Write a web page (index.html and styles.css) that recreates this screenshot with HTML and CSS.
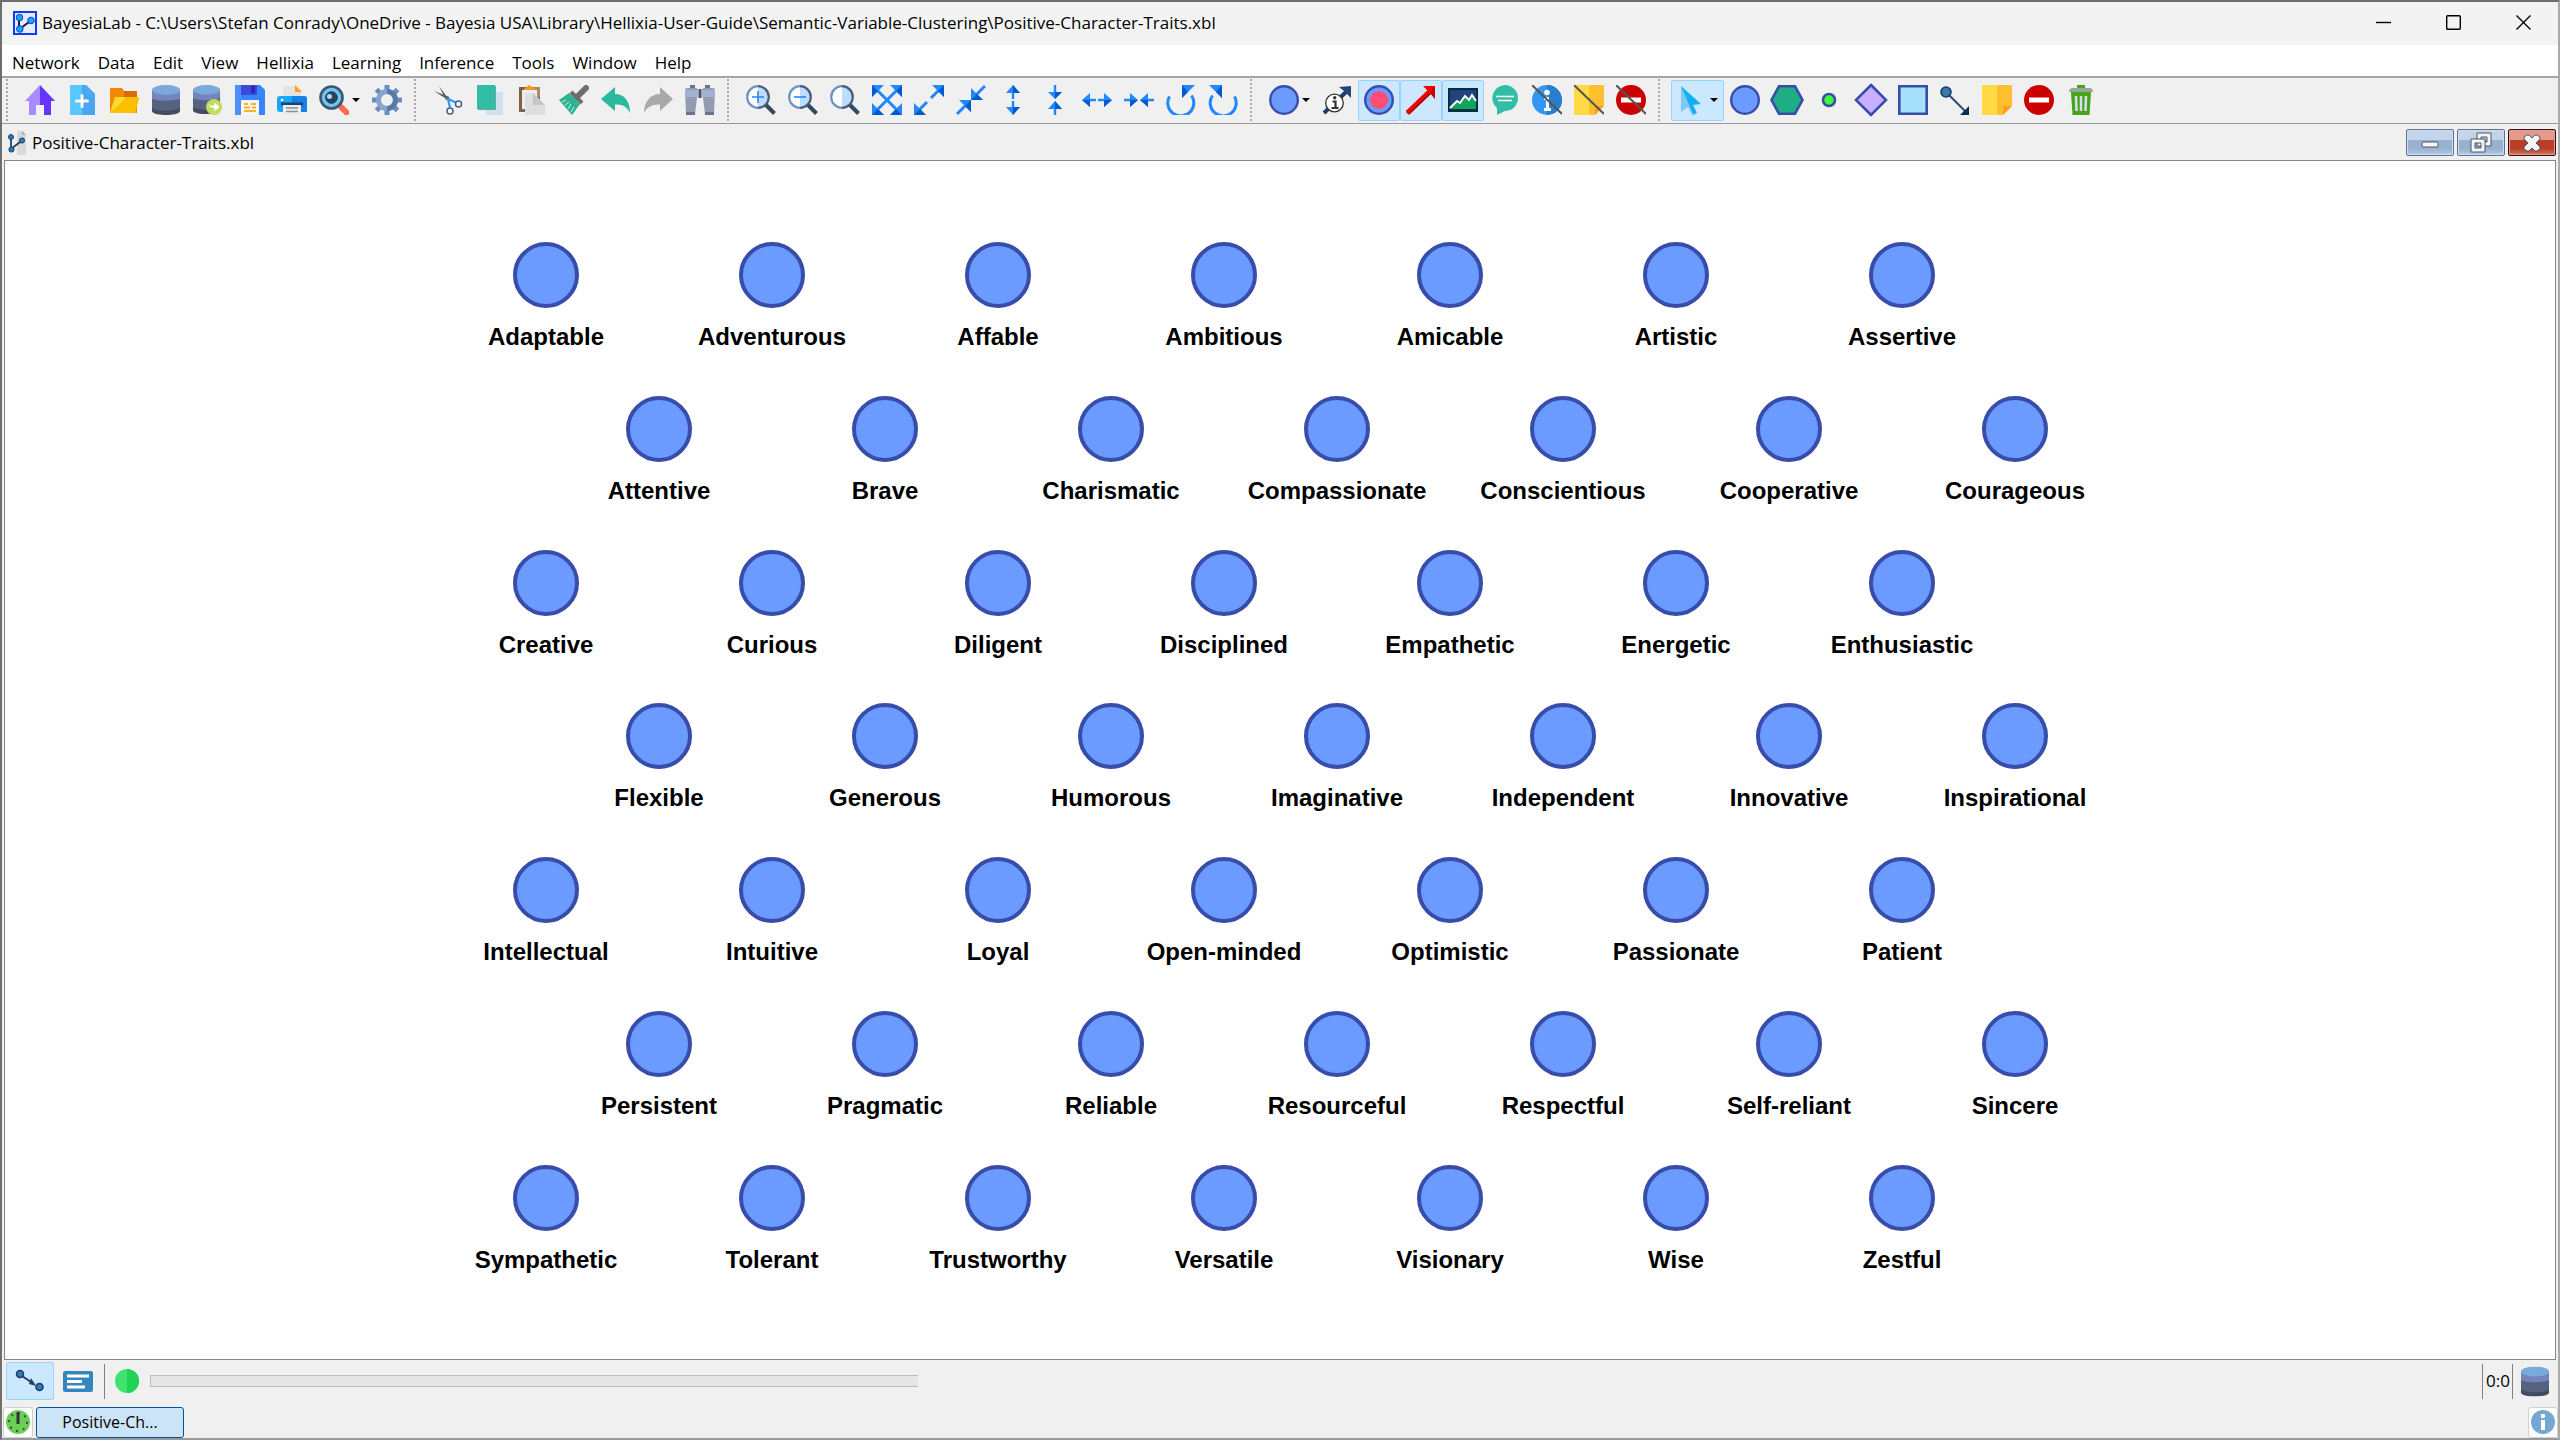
FILE: index.html
```html
<!DOCTYPE html>
<html lang="en">
<head>
  <meta charset="UTF-8">
  <title>BayesiaLab</title>
  <link rel="stylesheet" href="styles.css">
</head>
<body>
  <!-- shapes used more than once -->
  <svg class="defs">
    <symbol id="db" viewBox="0 0 30 30">
      <path d="M1 22v4c0 5.400 28 5.400 28 0v-4z" fill="#434b61"/>
      <path d="M1 15v7c0 5 28 5 28 0v-7z" fill="#56637f"/>
      <path d="M1 5v7c0 5.500 28 5.500 28 0V5z" fill="#7584c1"/>
      <path d="M1 12v4c0 5.400 28 5.400 28 0v-4c0 5-28 5-28 0z" fill="#56637f"/>
      <ellipse cx="15" cy="5" rx="14" ry="5" fill="#7ba9d9"/>
    </symbol>
    <symbol id="lens" viewBox="0 0 30 30">
      <path d="M19 19l9.500 9.500" stroke="#324860" stroke-width="4"/>
      <circle cx="12" cy="12" r="10.500" fill="#fff"/>
      <path d="M12 1.500a10.500 10.500 0 0 1 0 21z" fill="#bedcff"/>
      <path d="M12 1.200a10.800 10.800 0 0 0 0 21.600" fill="none" stroke="#6c93c3" stroke-width="2.200"/>
      <path d="M12 1.200a10.800 10.800 0 0 1 0 21.600" fill="none" stroke="#465d7c" stroke-width="2.200"/>
    </symbol>
    <symbol id="note" viewBox="0 0 30 30">
      <path d="M0 0h15v30H0z" fill="#ffda44"/>
      <path d="M15 0h15v21l-9 9h-6z" fill="#fdbf2d"/>
      <path d="M21 30v-9h9z" fill="#ff9f22"/>
    </symbol>
    <symbol id="stop" viewBox="0 0 30 30">
      <circle cx="15" cy="15" r="15" fill="#cd0000"/>
      <path d="M5 12.500h20v5H5z" fill="#fff"/>
    </symbol>
    <symbol id="rotate" viewBox="0 0 30 30">
      <path d="M3.500 11.500a13 13 0 1 0 22-1" fill="none" stroke="#2288ff" stroke-width="3"/>
      <path d="M16 0h13L16 13z" fill="#2288ff"/>
      <path d="M16 0v13l6-6z" fill="#005bcf"/>
    </symbol>
    <symbol id="graph" viewBox="0 0 18 24">
      <path d="M9 0h6l3 4v20H9z" fill="#d9d9d9"/>
      <path d="M14 0v4h4z" fill="#b0b0b0"/>
      <path d="M3 6v12l11-8.500" fill="none" stroke="#24405f" stroke-width="1.800"/>
      <circle cx="3" cy="6" r="2.500" fill="#2f7da5" stroke="#17407f"/>
      <circle cx="3.500" cy="18.500" r="2.600" fill="#2f7da5" stroke="#17407f"/>
      <circle cx="14" cy="9.500" r="2.600" fill="#2f7da5" stroke="#17407f"/>
    </symbol>
  </svg>

  <div class="window">
    <header class="titlebar">
      <svg class="app-icon" viewBox="0 0 24 24">
        <rect x="1" y="1" width="22" height="22" fill="#e9ecf8" stroke="#0a3cf5" stroke-width="2"/>
        <path d="M6 6.500v12l12-9" fill="none" stroke="#16203a" stroke-width="2"/>
        <circle cx="6.500" cy="6.500" r="3.300" fill="#1ba8ea" stroke="#0a3cf5"/>
        <circle cx="6.800" cy="18" r="3.300" fill="#1ba8ea" stroke="#0a3cf5"/>
        <circle cx="18" cy="9.500" r="3.300" fill="#1ba8ea" stroke="#0a3cf5"/>
      </svg>
      <h1 class="caption">BayesiaLab - C:\Users\Stefan Conrady\OneDrive - Bayesia USA\Library\Hellixia-User-Guide\Semantic-Variable-Clustering\Positive-Character-Traits.xbl</h1>
      <button class="win-btn" aria-label="Minimize"><svg viewBox="0 0 15 15"><path d="M0 7.500h15"/></svg></button>
      <button class="win-btn" aria-label="Maximize"><svg viewBox="0 0 15 15"><rect x=".7" y=".7" width="13.600" height="13.600" rx="1"/></svg></button>
      <button class="win-btn" aria-label="Close"><svg viewBox="0 0 15 15"><path d="M.5.5l14 14M14.500.5l-14 14"/></svg></button>
    </header>

    <nav class="menubar">
      <a href="#">Network</a>
      <a href="#">Data</a>
      <a href="#">Edit</a>
      <a href="#">View</a>
      <a href="#">Hellixia</a>
      <a href="#">Learning</a>
      <a href="#">Inference</a>
      <a href="#">Tools</a>
      <a href="#">Window</a>
      <a href="#">Help</a>
    </nav>

    <div class="toolbar">
      <span class="grip"></span>
      <button class="tool" aria-label="Home"><svg viewBox="0 0 30 30">
        <path d="M15 0L0 16h4v14h7V20h4z" fill="#a78bff"/><path d="M15 0l15 16h-4v14h-7V20h-4z" fill="#6534ff"/></svg></button>
      <button class="tool" aria-label="New"><svg viewBox="0 0 30 30">
        <path d="M3 0h12v30H3z" fill="#5ac8ff"/><path d="M15 0h4l9 9v21H15z" fill="#4aa6f0"/><path d="M19 0v9h9z" fill="#4ea9ed"/><path d="M9.500 16h11M15 10.500v11" stroke="#fff7ee" stroke-width="3" stroke-linecap="round"/></svg></button>
      <button class="tool" aria-label="Open"><svg viewBox="0 0 30 30">
        <path d="M1 3h12l2 3h13v22H1z" fill="#f08a00"/><path d="M15 6h13v8H15z" fill="#db6d00"/><path d="M6 12h10v15L1 28z" fill="#ffda2d"/><path d="M16 12h14.500L26 28H1l15-14z" fill="#fdbf00"/></svg></button>
      <button class="tool" aria-label="Data source"><svg viewBox="0 0 30 30"><use href="#db"/></svg></button>
      <button class="tool" aria-label="Associate data"><svg viewBox="0 0 30 30">
        <use href="#db" x="-1" width="29" height="29"/><circle cx="21" cy="22" r="8" fill="#bfdc5e"/><path d="M15.500 19c1 3 3 4 6 4v3.500l5-4.500-5-4.500V20c-2 1-4 1-6-1z" fill="#fff"/></svg></button>
      <button class="tool" aria-label="Save"><svg viewBox="0 0 30 30">
        <path d="M0 0h25l5 5v25H0z" fill="#3784ff"/><path d="M0 0h6v30H0z" fill="#4c92ff"/><path d="M6 0h16v10H6z" fill="#3b48d8"/><path d="M16 1h4v7h-4z" fill="#2929b0"/><path d="M6 15h18v15H6z" fill="#f5f5f5"/><path d="M9 19h4m3 0h5M9 22.500h6m2 0h4M9 26h12" stroke="#ffb125" stroke-width="1.800"/></svg></button>
      <button class="tool" aria-label="Print"><svg viewBox="0 0 30 30">
        <path d="M6 1h12l6 6v5H6z" fill="#e3e3e3"/><path d="M18 0v7h7z" fill="#ff9c1a"/><rect y="11" width="30" height="16" rx="3" fill="#1ca6fa"/><path d="M15 11h12q3 0 3 3v13H15z" fill="#1682e8"/><path d="M4 17.500h22v3H4z" fill="#1e4369"/><path d="M6 20h18v10H6z" fill="#ececec"/><path d="M9 23h12M9 26.500h12" stroke="#8e8e8e" stroke-width="1.500"/><circle cx="5" cy="15" r="1.300" fill="#fff"/></svg></button>
      <button class="tool drop" aria-label="Explore"><svg viewBox="0 0 30 30">
        <path d="M20 20l3 3" stroke="#3f5a78" stroke-width="3"/><path d="M22.500 22.500l5 5" stroke="#fb6b50" stroke-width="6" stroke-linecap="round"/><circle cx="12.500" cy="12.500" r="11" fill="#6cc6ee" stroke="#3f5572" stroke-width="2.600"/><circle cx="12.500" cy="12.500" r="5.800" fill="#26435f" stroke="#22364f"/><circle cx="10.500" cy="11.500" r="2.500" fill="#b6d7ea"/></svg><i class="arrow"></i></button>
      <button class="tool" aria-label="Settings"><svg viewBox="0 0 30 30">
        <path d="M15 0v30M0 15h30M4.500 4.500l21 21M25.500 4.500l-21 21" stroke="#6b8db9" stroke-width="5"/><circle cx="15" cy="15" r="8.500" fill="#f0f0f0" stroke="#86a5cc" stroke-width="5"/><path d="M15 6.500a8.500 8.500 0 0 1 0 17" fill="none" stroke="#587ba6" stroke-width="5"/></svg></button>

      <span class="grip"></span>
      <button class="tool" aria-label="Cut"><svg viewBox="0 0 30 30">
        <path d="M1 6l14 9 1.500-3zM6 1l7 14 2.500-1z" fill="#555f68"/><path d="M14 13.500l9 4M15 14l2 8.500" stroke="#2a9af3" stroke-width="2.200"/><circle cx="25.500" cy="19" r="3" fill="#fff" stroke="#475e83" stroke-width="1.500"/><circle cx="17" cy="26" r="3" fill="#fff" stroke="#475e83" stroke-width="1.500"/></svg></button>
      <button class="tool" aria-label="Copy"><svg viewBox="0 0 30 30">
        <path d="M11 7h17v23H11z" fill="#cfe1ee"/><path d="M3 1h18v24H3z" fill="#6aa9a4"/><path d="M2 0h18v24H2z" fill="#32bea6"/></svg></button>
      <button class="tool" aria-label="Paste"><svg viewBox="0 0 30 30">
        <path d="M2 2h21v25H2z" fill="#806047"/><path d="M13 2h10v10H13z" fill="#ae8b68"/><path d="M5 5h15v19H5z" fill="#eee"/><path d="M7 4l5-4 6 4v1H7z" fill="#ff9515"/><path d="M8 8h8l12 12v10H8z" fill="#dedede"/><path d="M16 8l12 12H16z" fill="#c5c5c5"/></svg></button>
      <button class="tool" aria-label="Copy format"><svg viewBox="0 0 30 30">
        <path d="M18 12l9-9" stroke="#6d6d6d" stroke-width="6" stroke-linecap="round"/><path d="M12 7l11 11" stroke="#6d6d6d" stroke-width="4"/><path d="M10 8L0 15l13 15 8-11z" fill="#2eb395"/><path d="M3 17l4-2M6 20l4-3M9 24l3-5M12 27l3-5" stroke="#c7eee4"/></svg></button>
      <button class="tool" aria-label="Undo"><svg viewBox="0 0 30 30">
        <path d="M0 14L14 2v7c10 0 15 8 15 19-3-6-7-9-15-8.500V26z" fill="#2ab99c"/></svg></button>
      <button class="tool" aria-label="Redo"><svg viewBox="0 0 30 30">
        <path d="M30 14L17 2v7C7 9 1 17 1 28c3-6 8-9 16-8.500V26z" fill="#a9a9a9"/></svg></button>
      <button class="tool" aria-label="Find"><svg viewBox="0 0 30 30">
        <path d="M0 5q0-2 3-2h7q3 0 3 2l-1 8-2 16H1zM30 5q0-2-3-2h-7q-3 0-3 2l1 8 2 16h9z" fill="#929cb3"/><path d="M0 5h13v7H0zM17 5h13v7H17z" fill="#a3b1d3"/><path d="M5 0h5v3H5zM20 0h5v3h-5zM1 27h9v3H1zM20 27h9v3h-9z" fill="#68748b"/><path d="M13.500 4h3v9h-3z" fill="#4a5667"/></svg></button>

      <span class="grip"></span>
      <button class="tool" aria-label="Zoom in"><svg viewBox="0 0 30 30"><use href="#lens"/><path d="M6 12h12M12 6v12" stroke="#2288ff" stroke-width="1.600"/></svg></button>
      <button class="tool" aria-label="Zoom out"><svg viewBox="0 0 30 30"><use href="#lens"/><path d="M6 12h12" stroke="#2288ff" stroke-width="1.600"/></svg></button>
      <button class="tool" aria-label="Default zoom"><svg viewBox="0 0 30 30"><use href="#lens"/></svg></button>
      <button class="tool" aria-label="Best fit"><svg viewBox="0 0 30 30">
        <path d="M4 4l22 22M26 4L4 26" stroke="#2288ff" stroke-width="3"/><path d="M0 0h12L0 12zM30 0H18l12 12zM0 30h12L0 18zM30 30H18l12-12z" fill="#2288ff"/><path d="M0 12V0l6 6zM30 12V0l-6 6zM0 30h12l-6-6zM30 30H18l6-6z" fill="#005bcf"/></svg></button>
      <button class="tool" aria-label="Stretch"><svg viewBox="0 0 30 30">
        <path d="M17 13l9-9M13 17l-9 9" stroke="#2288ff" stroke-width="3"/><path d="M30 0H18l12 12zM0 30h12L0 18z" fill="#2288ff"/><path d="M30 12V0l-6 6zM0 30h12l-6-6z" fill="#005bcf"/></svg></button>
      <button class="tool" aria-label="Shrink"><svg viewBox="0 0 30 30">
        <path d="M29 1l-9 9M1 29l9-9" stroke="#2288ff" stroke-width="3"/><path d="M15 3v12h12zM15 27V15H3z" fill="#2288ff"/><path d="M15 15h12l-6-6zM15 27V15l-6 6z" fill="#005bcf"/></svg></button>
      <button class="tool" aria-label="Stretch vertically"><svg viewBox="0 0 30 30">
        <path d="M15 3v11M15 16v11" stroke="#2288ff" stroke-width="2.400"/><path d="M15 0l7 8H8zM15 30l7-8H8z" fill="#2288ff"/><path d="M15 0l7 8h-7zM15 30l7-8h-7z" fill="#005bcf"/></svg></button>
      <button class="tool" aria-label="Shrink vertically"><svg viewBox="0 0 30 30">
        <path d="M15 0v10M15 20v10" stroke="#2288ff" stroke-width="2.400"/><path d="M15 14l7-7H8zM15 16l7 8H8z" fill="#2288ff"/><path d="M15 14l7-7h-7zM15 16l7 8h-7z" fill="#005bcf"/></svg></button>
      <button class="tool" aria-label="Stretch horizontally"><svg viewBox="0 0 30 30">
        <path d="M3 15h11M16 15h11" stroke="#2288ff" stroke-width="2.400"/><path d="M0 15l8-7v14zM30 15l-8-7v14z" fill="#2288ff"/><path d="M0 15l8 7v-7zM30 15l-8 7v-7z" fill="#005bcf"/></svg></button>
      <button class="tool" aria-label="Shrink horizontally"><svg viewBox="0 0 30 30">
        <path d="M0 15h10M20 15h10" stroke="#2288ff" stroke-width="2.400"/><path d="M14 15L6 8v14zM16 15l8-7v14z" fill="#2288ff"/><path d="M14 15l-8 7v-7zM16 15l8 7v-7z" fill="#005bcf"/></svg></button>
      <button class="tool" aria-label="Rotate left"><svg viewBox="0 0 30 30"><use href="#rotate"/></svg></button>
      <button class="tool" aria-label="Rotate right"><svg viewBox="0 0 30 30"><use href="#rotate" class="mirror"/></svg></button>

      <span class="grip"></span>
      <button class="tool drop" aria-label="Node style"><svg viewBox="0 0 30 30"><circle cx="15" cy="15" r="13.800" fill="#6b9bff" stroke="#384caa" stroke-width="2.400"/></svg><i class="arrow"></i></button>
      <button class="tool" aria-label="Arc comments"><svg viewBox="0 0 30 30">
        <path d="M2 28L24 7" stroke="#1d3c68" stroke-width="4"/><path d="M17 2l12-1v12l-4-4-3-3z" fill="#24457c"/><circle cx="12.500" cy="18" r="8.800" fill="#fff" stroke="#333" stroke-width="1.300"/><path d="M10.500 16.500h3V23m-4 0h7" fill="none" stroke="#333" stroke-width="2.200"/><circle cx="12.700" cy="12.800" r="1.700" fill="#333"/></svg></button>
      <button class="tool on" aria-label="Target node"><svg viewBox="0 0 30 30"><circle cx="15" cy="15" r="13.800" fill="#6b9bff" stroke="#384caa" stroke-width="2.400"/><circle cx="15" cy="15" r="9" fill="#ff4d74"/></svg></button>
      <button class="tool on" aria-label="Arcs"><svg viewBox="0 0 30 30">
        <path d="M1 28L24 6" stroke="#f00000" stroke-width="4.500"/><path d="M3 29L25 8" stroke="#a80000" stroke-width="1.500"/><path d="M17 1h12v13l-4-5-4-4z" fill="#f00000"/><path d="M29 1v13l-5-6z" fill="#c40000"/></svg></button>
      <button class="tool on" aria-label="Background image"><svg viewBox="0 0 30 30">
        <path d="M0 3h30v24H0z" fill="#042c4b"/><path d="M2 5h26v19H2z" fill="#24437a"/><path d="M2 24l7-7 3 2 5-7 4 4 3-5 4 6v7H2z" fill="#10a55b"/><path d="M2 23l7-7 3 2 5-7 4 4 3-5 4 6" fill="none" stroke="#fff" stroke-width="2"/></svg></button>
      <button class="tool" aria-label="Comments"><svg viewBox="0 0 30 30">
        <path d="M15 0a13 13 0 1 1 0 26l-8 4V23A13 13 0 0 1 15 0z" fill="#32bea6"/><path d="M6 11.500h18M8 15.500h14" stroke="#fff" stroke-width="1.300"/></svg></button>
      <button class="tool" aria-label="Hide information"><svg viewBox="0 0 30 30">
        <circle cx="15" cy="15" r="15" fill="#3296f4"/><path d="M15 0a15 15 0 0 1 0 30z" fill="#287dcd"/><circle cx="15" cy="7.500" r="2.800" fill="#fff"/><path d="M12 13.500h3.500V25M12 24.500h7" fill="none" stroke="#fff" stroke-width="3"/><path d="M0 0l30 29" stroke="#555" stroke-width="2"/></svg></button>
      <button class="tool" aria-label="Hide notes"><svg viewBox="0 0 30 30"><use href="#note"/><path d="M0 0l30 29" stroke="#555" stroke-width="2"/></svg></button>
      <button class="tool" aria-label="Hide forbidden arcs"><svg viewBox="0 0 30 30"><use href="#stop"/><path d="M0 0l30 29" stroke="#555" stroke-width="2"/></svg></button>

      <span class="grip"></span>
      <button class="tool drop on" aria-label="Select"><svg viewBox="0 0 30 30">
        <path d="M4 1v26l7-5 4 8h4L4 1z" fill="#7ec9f1"/><path d="M4 1l20 18-8 1 4 8-4 1z" fill="#10b0f2"/></svg><i class="arrow"></i></button>
      <button class="tool" aria-label="Node"><svg viewBox="0 0 30 30"><circle cx="15" cy="15" r="13.800" fill="#6b9bff" stroke="#384caa" stroke-width="2.400"/></svg></button>
      <button class="tool" aria-label="Constraint"><svg class="wide" viewBox="0 0 34 30"><path d="M9 1.300h16L32.500 15 25 28.700H9L1.500 15z" fill="#1dae83" stroke="#384caa" stroke-width="2.600"/></svg></button>
      <button class="tool" aria-label="Function node"><svg viewBox="0 0 30 30"><circle cx="15" cy="15" r="6" fill="#3cff32" stroke="#384caa" stroke-width="2.600"/></svg></button>
      <button class="tool" aria-label="Utility"><svg class="wide" viewBox="0 0 34 34"><path d="M17 2l15 15-15 15L2 17z" fill="#c8afff" stroke="#384caa" stroke-width="2.600"/></svg></button>
      <button class="tool" aria-label="Decision"><svg viewBox="0 0 30 30"><path d="M1.300 1.300h27.400v27.400H1.300z" fill="#a6dffb" stroke="#384caa" stroke-width="2.600"/></svg></button>
      <button class="tool" aria-label="Arc"><svg viewBox="0 0 30 30">
        <path d="M9 10l16 16" stroke="#2b4d67" stroke-width="2"/><path d="M29 21v9h-9z" fill="#0b2d56"/><circle cx="6" cy="7" r="5" fill="#387c9c" stroke="#17387f" stroke-width="1.600"/></svg></button>
      <button class="tool" aria-label="Note"><svg viewBox="0 0 30 30"><use href="#note"/></svg></button>
      <button class="tool" aria-label="Forbidden arc"><svg viewBox="0 0 30 30"><use href="#stop"/></svg></button>
      <button class="tool" aria-label="Delete"><svg viewBox="0 0 30 30">
        <path d="M5 7h20l-1.500 23h-17z" fill="#45a516"/><path d="M10 11l.5 15M15 11v15M20 11l-.5 15" stroke="#d8dcf0" stroke-width="2.500"/><path d="M11 0h8v3h-8z" fill="#45a516"/><path d="M3 7q0-4 4-4h16q4 0 4 4z" fill="#98a69a"/></svg></button>
    </div>

    <div class="doc-head">
      <svg class="doc-icon" viewBox="0 0 18 24"><use href="#graph"/></svg>
      <h2 class="doc-name">Positive-Character-Traits.xbl</h2>
      <button class="doc-btn" aria-label="Minimize document"><svg viewBox="0 0 20 20"><rect x="2" y="9" width="16" height="5" rx="1" class="glyph"/></svg></button>
      <button class="doc-btn" aria-label="Restore document"><svg viewBox="0 0 20 20"><path d="M6 0h14v13H6zM10 4h6v5h-6z" fill-rule="evenodd" class="glyph"/><path d="M0 6h14v13H0zM4 10h6v5H4z" fill-rule="evenodd" class="glyph"/></svg></button>
      <button class="doc-btn close" aria-label="Close document"><svg viewBox="0 0 20 20"><path d="M2 4l3-2h2l3 3 3-3h2l3 2v2l-4 4 4 4v2l-3 2h-2l-3-3-3 3H5l-3-2v-2l4-4-4-4z" class="glyph"/></svg></button>
    </div>

    <main class="canvas" id="canvas"></main>

    <footer class="status">
      <button class="mode on" aria-label="Modeling mode"><svg viewBox="0 0 30 24">
        <path d="M7 7l12 8" stroke="#24405f" stroke-width="2"/><path d="M14 15l2-6 5 8z" fill="#24405f"/><circle cx="5" cy="5" r="3.500" fill="#387c9c" stroke="#143a85" stroke-width="1.600"/><circle cx="24.500" cy="18" r="3.500" fill="#387c9c" stroke="#143a85" stroke-width="1.600"/></svg></button>
      <button class="mode" aria-label="Validation mode"><svg viewBox="0 0 30 24">
        <rect y="2" width="30" height="21" rx="2" fill="#3386c0"/><path d="M4 7h22M4 12.500h15M4 18h18" stroke="#fff" stroke-width="3"/></svg></button>
      <span class="rule"></span>
      <svg class="lamp" viewBox="0 0 24 24"><circle cx="12" cy="12" r="12" fill="#40e36f"/><path d="M12 0a12 12 0 0 1 0 24z" fill="#20d355"/></svg>
      <div class="progress"></div>
      <span class="rule push"></span>
      <span class="counter">0:0</span>
      <span class="rule"></span>
      <svg class="db" viewBox="0 0 30 30"><use href="#db"/></svg>
    </footer>

    <div class="tabs">
      <button class="small" aria-label="Memory"><svg viewBox="0 0 24 24">
        <circle cx="12" cy="12" r="12" fill="#6bce58"/><circle cx="12" cy="12" r="9" fill="none" stroke="#2c5930" stroke-width="2" stroke-dasharray="2 5"/><circle cx="12" cy="12" r="7" fill="#6bce58"/><path d="M12 2v12" stroke="#333" stroke-width="3"/></svg></button>
      <button class="tab">Positive-Ch...</button>
      <button class="small push" aria-label="Information"><svg viewBox="0 0 24 24">
        <circle cx="12" cy="12" r="12" fill="#74a7d1"/><circle cx="12" cy="6" r="2.300" fill="#fff"/><path d="M12 10v10" stroke="#fff" stroke-width="4"/></svg></button>
    </div>
  </div>

  <script src="script.js"></script>
</body>
</html>
```
FILE: styles.css
```css
* { box-sizing: border-box; }
body {
  margin: 0;
  background: #f0f0f0;
  color: #000;
  font: 17px/24px "Open Sans", "Noto Sans", sans-serif;
}
button {
  margin: 0;
  padding: 0;
  border: 1px solid transparent;
  background: none;
  font: inherit;
  color: inherit;
}
svg { display: block; }
.defs { position: absolute; width: 0; height: 0; }
.push { margin-left: auto; }

.window {
  display: flex;
  flex-direction: column;
  min-height: 100vh;
  border: 2px solid #6f6f6f;
  border-right-color: #aaa;
  border-bottom-color: #999;
}

/* title bar */
.titlebar {
  display: flex;
  align-items: center;
  height: 43px;
  padding: 0 0 2px 11px;
  background: #f3f3f3;
}
.app-icon { width: 24px; height: 24px; margin-right: 5px; }
.caption {
  flex: 1;
  margin: 0;
  font-size: 17px;
  font-weight: normal;
  white-space: nowrap;
}
.win-btn {
  display: grid;
  place-items: center;
  width: 70px;
  height: 41px;
}
.win-btn svg { width: 15px; height: 15px; fill: none; stroke: #000; stroke-width: 1.4; }

/* menu */
.menubar {
  display: flex;
  align-items: center;
  gap: 18px;
  height: 33px;
  padding: 4px 10px 0;
  background: #fff;
  border-bottom: 2px solid #a5a5a5;
}
.menubar a { color: #000; text-decoration: none; }

/* toolbar */
.toolbar {
  display: flex;
  align-items: center;
  height: 46px;
  padding-bottom: 1px;
  border-bottom: 1px solid #9a9a9a;
}
.grip {
  width: 2px;
  height: 42px;
  margin: 0 11px 0 6px;
  background: repeating-linear-gradient(#aaa 0 2px, #f0f0f0 2px 4px);
}
.grip:first-child { margin-left: 4px; }
.tool {
  display: flex;
  align-items: center;
  width: 42px;
  height: 41px;
  padding-left: 5px;
  border-radius: 2px;
}
.tool svg { flex: none; width: 30px; height: 30px; }
.tool svg.wide { width: 34px; height: 34px; margin-left: -2px; }
.tool.drop { width: 53px; }
.on { background: #cce8ff; border-color: #99d1ff; }
.mirror { transform: translateX(30px) scaleX(-1); }
.arrow {
  margin-left: 3px;
  border: 4px solid transparent;
  border-top-color: #000;
  border-bottom: 0;
}

/* document window */
.doc-head {
  display: flex;
  align-items: center;
  gap: 3px;
  height: 36px;
  padding: 1px 2px 0 6px;
}
.doc-icon { width: 18px; height: 24px; margin-right: 3px; }
.doc-name { flex: 1; margin: 0; font-size: 17px; font-weight: normal; }
.doc-btn {
  display: grid;
  place-items: center;
  width: 48px;
  height: 27px;
  border: 1px solid #5f7395;
  border-radius: 2px;
  background: linear-gradient(#c3d5ea 0 40%, #98b1cf 40% 75%, #b5cde5);
  box-shadow: inset 0 0 0 1px #cfdcec;
}
.doc-btn.close {
  border-color: #3c0d14;
  background: linear-gradient(#e5988c 0 40%, #b93e28 40% 75%, #d07c60);
  box-shadow: inset 0 0 0 1px #dda096;
}
.doc-btn svg { width: 20px; height: 20px; overflow: visible; }
.glyph { fill: #f5f5f5; stroke: #4c566b; stroke-width: 1; }

.canvas {
  position: relative;
  flex: 1;
  min-height: 1100px;
  margin: 0 2px;
  border: 1px solid #84848c;
  background: #fff;
}
.node {
  position: absolute;
  display: flex;
  flex-direction: column;
  align-items: center;
  gap: 15px;
  width: 226px;
  font: bold 24px/28px "Liberation Sans", Arial, sans-serif;
}
.node::before {
  content: "";
  box-sizing: border-box;
  width: 66px;
  height: 66px;
  border: 4px solid #384caa;
  border-radius: 50%;
  background: #6b9bff;
}

/* status bar */
.status {
  display: flex;
  align-items: center;
  height: 43px;
  padding: 0 8px 1px 4px;
}
.mode {
  display: grid;
  place-items: center;
  width: 48px;
  height: 38px;
  border-radius: 2px;
}
.mode svg { width: 30px; height: 24px; }
.rule { width: 1px; height: 35px; background: #808080; }
.rule:not(.push) { margin-left: 2px; }
.lamp { width: 24px; height: 24px; margin: 0 11px 0 10px; }
.progress {
  width: 30vw;
  height: 12px;
  border: 1px solid #bcbcbc;
  border-right: 0;
  background: #e6e6e6;
}
.counter { margin-left: 3px; }
.db { width: 30px; height: 31px; margin-left: 7px; }

.tabs {
  display: flex;
  align-items: center;
  gap: 3px;
  height: 35px;
  padding: 3px 0 0 1px;
}
.small {
  display: grid;
  place-items: center;
  width: 30px;
  height: 31px;
  border-color: #d0d0d0;
  border-radius: 3px;
  background: #fdfdfd;
}
.small.push { margin-left: auto; }
.small svg { width: 24px; height: 24px; }
.tab {
  width: 148px;
  height: 31px;
  border-color: #005499;
  border-radius: 3px;
  background: #cce4f7;
  font-size: 16px;
}
```
FILE: script.js
```js
const traits = [
  ['Adaptable', 'Adventurous', 'Affable', 'Ambitious', 'Amicable', 'Artistic', 'Assertive'],
  ['Attentive', 'Brave', 'Charismatic', 'Compassionate', 'Conscientious', 'Cooperative', 'Courageous'],
  ['Creative', 'Curious', 'Diligent', 'Disciplined', 'Empathetic', 'Energetic', 'Enthusiastic'],
  ['Flexible', 'Generous', 'Humorous', 'Imaginative', 'Independent', 'Innovative', 'Inspirational'],
  ['Intellectual', 'Intuitive', 'Loyal', 'Open-minded', 'Optimistic', 'Passionate', 'Patient'],
  ['Persistent', 'Pragmatic', 'Reliable', 'Resourceful', 'Respectful', 'Self-reliant', 'Sincere'],
  ['Sympathetic', 'Tolerant', 'Trustworthy', 'Versatile', 'Visionary', 'Wise', 'Zestful']
];

const canvas = document.getElementById('canvas');

// every second row is shifted by half a column
traits.forEach((row, r) => {
  row.forEach((name, c) => {
    const node = document.createElement('div');
    node.className = 'node';
    node.textContent = name;
    node.style.left = 428 + c * 226 + (r % 2) * 113 + 'px';
    node.style.top = 81 + Math.round(r * 153.8) + 'px';
    canvas.appendChild(node);
  });
});
```
